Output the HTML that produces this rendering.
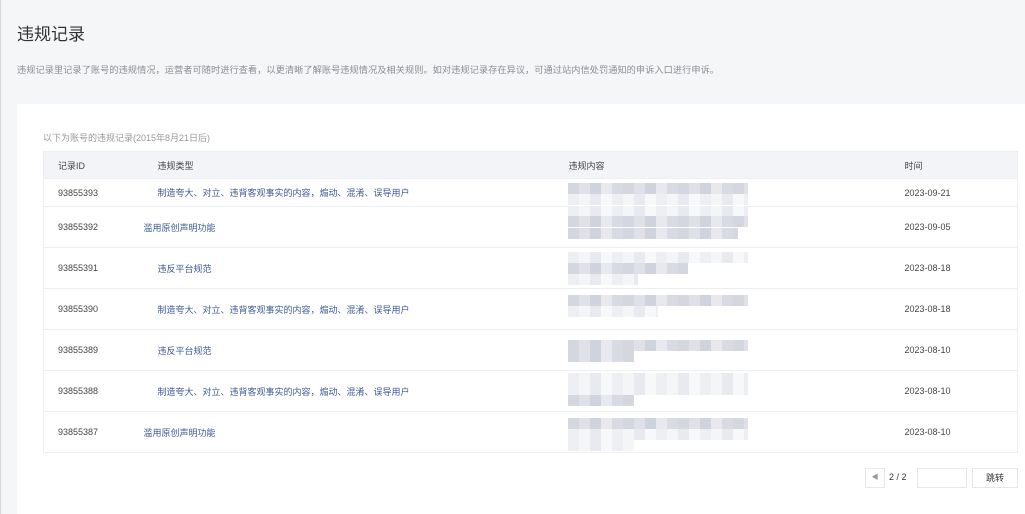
<!DOCTYPE html>
<html><head><meta charset="utf-8"><style>
*{margin:0;padding:0;box-sizing:border-box}
body{width:1025px;height:514px;overflow:hidden;background:#f5f6f8;font-family:"Liberation Sans","Noto Sans CJK SC",sans-serif;position:relative}
.edge{position:absolute;left:0;top:0;width:1px;height:514px;background:#d6d6d6}
h1{position:absolute;left:17px;top:20px;font-size:17px;font-weight:normal;color:#333}
.desc{position:absolute;left:17px;top:62px;font-size:9.2px;color:#8a8d93;white-space:nowrap;letter-spacing:0.05px}
.card{position:absolute;left:17px;top:104px;width:1008px;height:410px;background:#fff}
.sub{position:absolute;left:43px;top:131px;font-size:9px;color:#999}
table{position:absolute;left:43px;top:151px;width:975px;border-collapse:collapse;font-size:9px;color:#444;table-layout:fixed;border:1px solid #eceef2}
th{background:#f3f4f7;font-weight:normal;text-align:left;height:27px;border-bottom:1px solid #eceef2}
td{height:41px;border-top:1px solid #eceef2;border-bottom:1px solid #eceef2}
tr.r1 td{height:28px}
.c1{padding-left:14px;width:100px}.c2{padding-left:14px;width:425px}.c3{width:336px}
.n{padding-left:0}
.t{color:#3c5a96}
.b{position:absolute;left:568px;height:11px}
.m{background:repeating-linear-gradient(90deg,#d4d6e0 0 11px,#dfe0e8 11px 22px,#cfd3de 22px 33px,#e8e9ee 33px 44px,#d8dae4 44px 55px)}
.l{background:repeating-linear-gradient(90deg,#eeeff3 0 11px,#f4f5f7 11px 22px,#e9eaf0 22px 33px,#f7f8fa 33px 44px)}
.pg{position:absolute;top:468px;height:20px;border:1px solid #e6e6e6;background:#fff;font-size:9px;color:#333;text-align:center;line-height:18px}
</style></head><body>
<div class="edge"></div>
<h1>违规记录</h1>
<div class="desc">违规记录里记录了账号的违规情况，运营者可随时进行查看，以更清晰了解账号违规情况及相关规则。如对违规记录存在异议，可通过站内信处罚通知的申诉入口进行申诉。</div>
<div class="card"></div>
<div class="sub">以下为账号的违规记录(2015年8月21日后)</div>
<table>
<tr><th class="c1">记录ID</th><th class="c2">违规类型</th><th class="c3">违规内容</th><th>时间</th></tr>
<tr class="r1"><td class="c1">93855393</td><td class="c2 t">制造夸大、对立、违背客观事实的内容，煽动、混淆、误导用户</td><td></td><td>2023-09-21</td></tr>
<tr><td class="c1">93855392</td><td class="c2 t n">滥用原创声明功能</td><td></td><td>2023-09-05</td></tr>
<tr><td class="c1">93855391</td><td class="c2 t">违反平台规范</td><td></td><td>2023-08-18</td></tr>
<tr><td class="c1">93855390</td><td class="c2 t">制造夸大、对立、违背客观事实的内容，煽动、混淆、误导用户</td><td></td><td>2023-08-18</td></tr>
<tr><td class="c1">93855389</td><td class="c2 t">违反平台规范</td><td></td><td>2023-08-10</td></tr>
<tr><td class="c1">93855388</td><td class="c2 t">制造夸大、对立、违背客观事实的内容，煽动、混淆、误导用户</td><td></td><td>2023-08-10</td></tr>
<tr><td class="c1">93855387</td><td class="c2 t n">滥用原创声明功能</td><td></td><td>2023-08-10</td></tr>
</table>
<div class="b m" style="top:183px;width:180px"></div><div class="b l" style="top:194px;width:180px"></div>
<div class="b l" style="top:206px;width:180px"></div><div class="b m" style="top:216px;width:180px"></div><div class="b m" style="top:228px;width:170px"></div>
<div class="b l" style="top:252px;width:180px"></div><div class="b m" style="top:263px;width:120px"></div><div class="b l" style="top:274px;width:70px"></div>
<div class="b m" style="top:295px;width:180px"></div><div class="b l" style="top:306px;width:90px"></div>
<div class="b m" style="top:340px;width:180px"></div><div class="b m" style="top:351px;width:66px"></div>
<div class="b l" style="top:373px;width:180px"></div><div class="b l" style="top:384px;width:180px"></div><div class="b m" style="top:395px;width:66px"></div>
<div class="b m" style="top:418px;width:180px"></div><div class="b l" style="top:429px;width:180px"></div><div class="b l" style="top:440px;width:66px"></div>
<div class="pg" style="left:865px;width:20px;color:#999;font-size:7px">◀</div>
<div style="position:absolute;left:889px;top:472px;font-size:9px;color:#333">2 / 2</div>
<div class="pg" style="left:917px;width:50px"></div>
<div class="pg" style="left:972px;width:46px">跳转</div>
</body></html>
